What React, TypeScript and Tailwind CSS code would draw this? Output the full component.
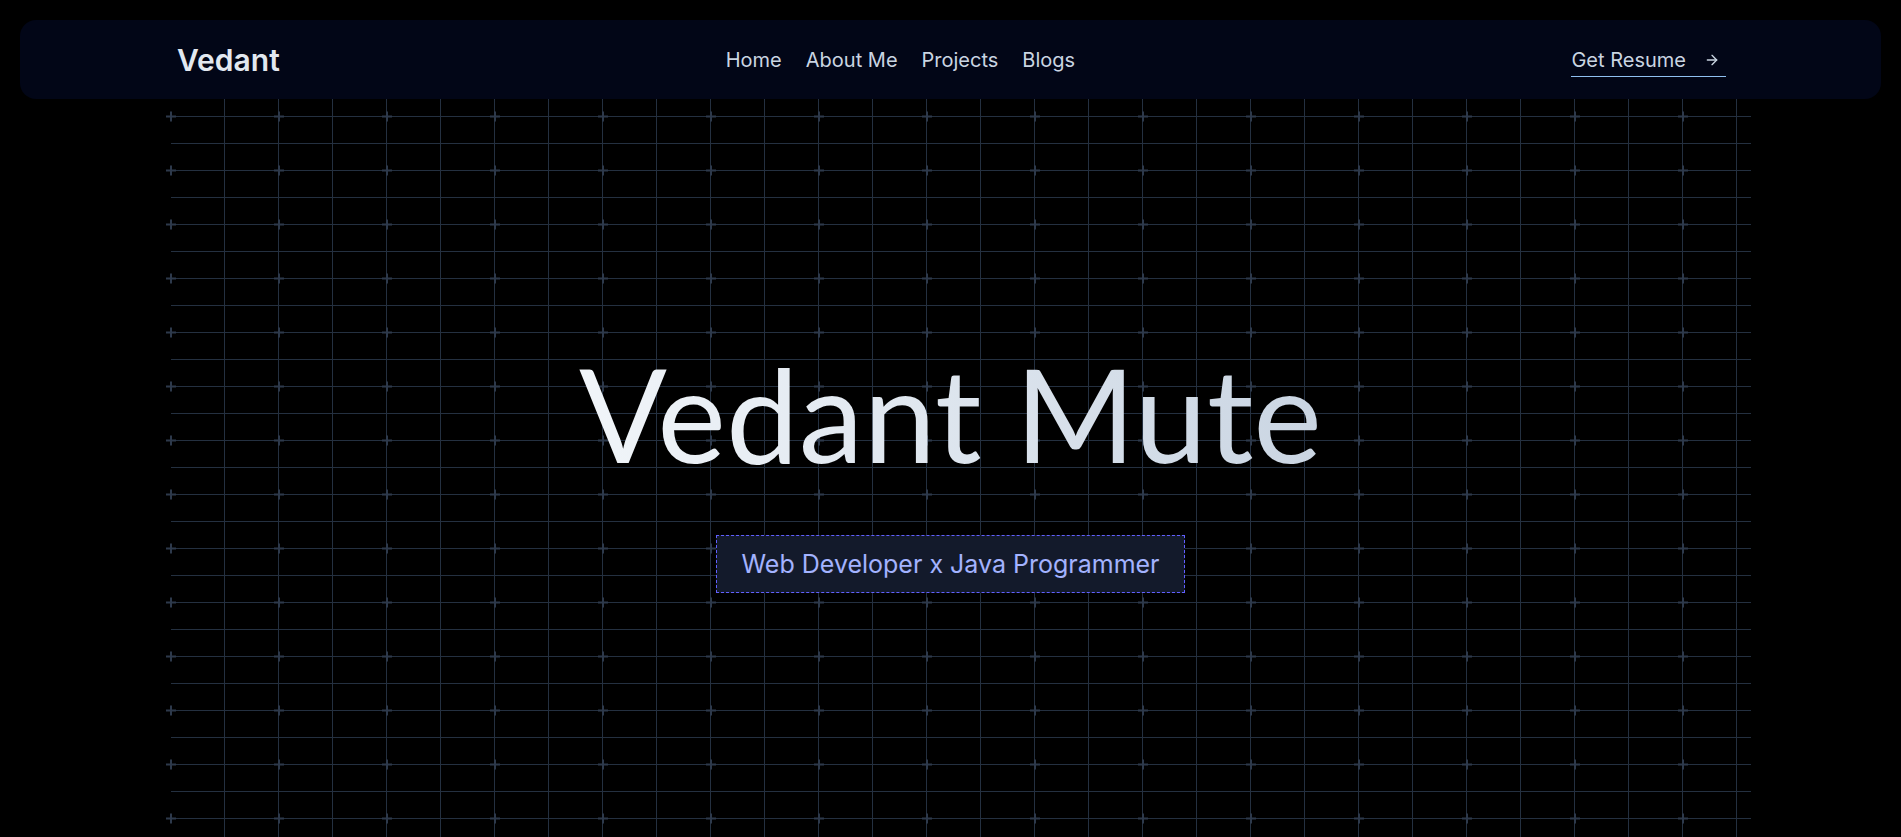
import { ArrowRight } from 'lucide-react';

const links = ['Home', 'About Me', 'Projects', 'Blogs'];

export default function App() {
  return (
    <div className="flex min-h-screen flex-col bg-black font-['Inter',sans-serif] text-slate-300">
      {/* Navbar */}
      <div className="px-5 pt-5">
        <nav className="flex h-[79px] items-center rounded-2xl bg-[#020617] pl-[157px] pr-[155px]">
          <a href="#" className="text-3xl font-semibold text-slate-200">
            Vedant
          </a>
          <ul className="ml-[446px] flex items-center gap-6 text-xl">
            {links.map((l) => (
              <li key={l}>
                <a href="#" className="text-slate-300">
                  {l}
                </a>
              </li>
            ))}
          </ul>
          <a
            href="#"
            className="ml-auto mt-[4px] flex items-center gap-[18px] border-b-[1.5px] border-[#8fbff0] pb-[2px] pr-1.5 text-xl leading-7 text-slate-300"
          >
            Get Resume
            <ArrowRight className="h-4 w-4" strokeWidth={2} />
          </a>
        </nav>
      </div>

      {/* Hero */}
      <section className="relative flex-1">
        <GridBackdrop />
        <div className="relative flex flex-col items-center pt-[249px]">
          <h1 className="bg-linear-to-r from-slate-100 to-slate-300 bg-clip-text font-['Lato',sans-serif] text-[130px] font-normal leading-none text-transparent">
            Vedant Mute
          </h1>
          <div className="mt-[57px] border border-dashed border-indigo-500 bg-[#131a2b] px-6 py-3 text-[25px] leading-8 text-indigo-300">
            Web Developer x Java Programmer
          </div>
        </div>
      </section>
    </div>
  );
}

/* ——— grid lines with plus marks ——— */

function GridBackdrop() {
  return (
    <svg
      aria-hidden="true"
      className="pointer-events-none absolute inset-y-0 left-[161px] h-full w-[1600px]"
    >
      <defs>
        <pattern id="lines" x="10" y="17" width="54" height="27" patternUnits="userSpaceOnUse">
          <path d="M0 0.5H54M53.5 0V27" stroke="#243040" strokeWidth="1" fill="none" />
        </pattern>
        <pattern id="plus" x="-44" y="-10" width="108" height="54" patternUnits="userSpaceOnUse">
          <path d="M49 27.5H59M54 22.5V32.5" stroke="#2d394b" strokeWidth="2" fill="none" />
        </pattern>
      </defs>
      <rect x="10" y="0" width="1580" height="100%" fill="url(#lines)" />
      <rect x="0" y="0" width="1600" height="100%" fill="url(#plus)" />
    </svg>
  );
}
